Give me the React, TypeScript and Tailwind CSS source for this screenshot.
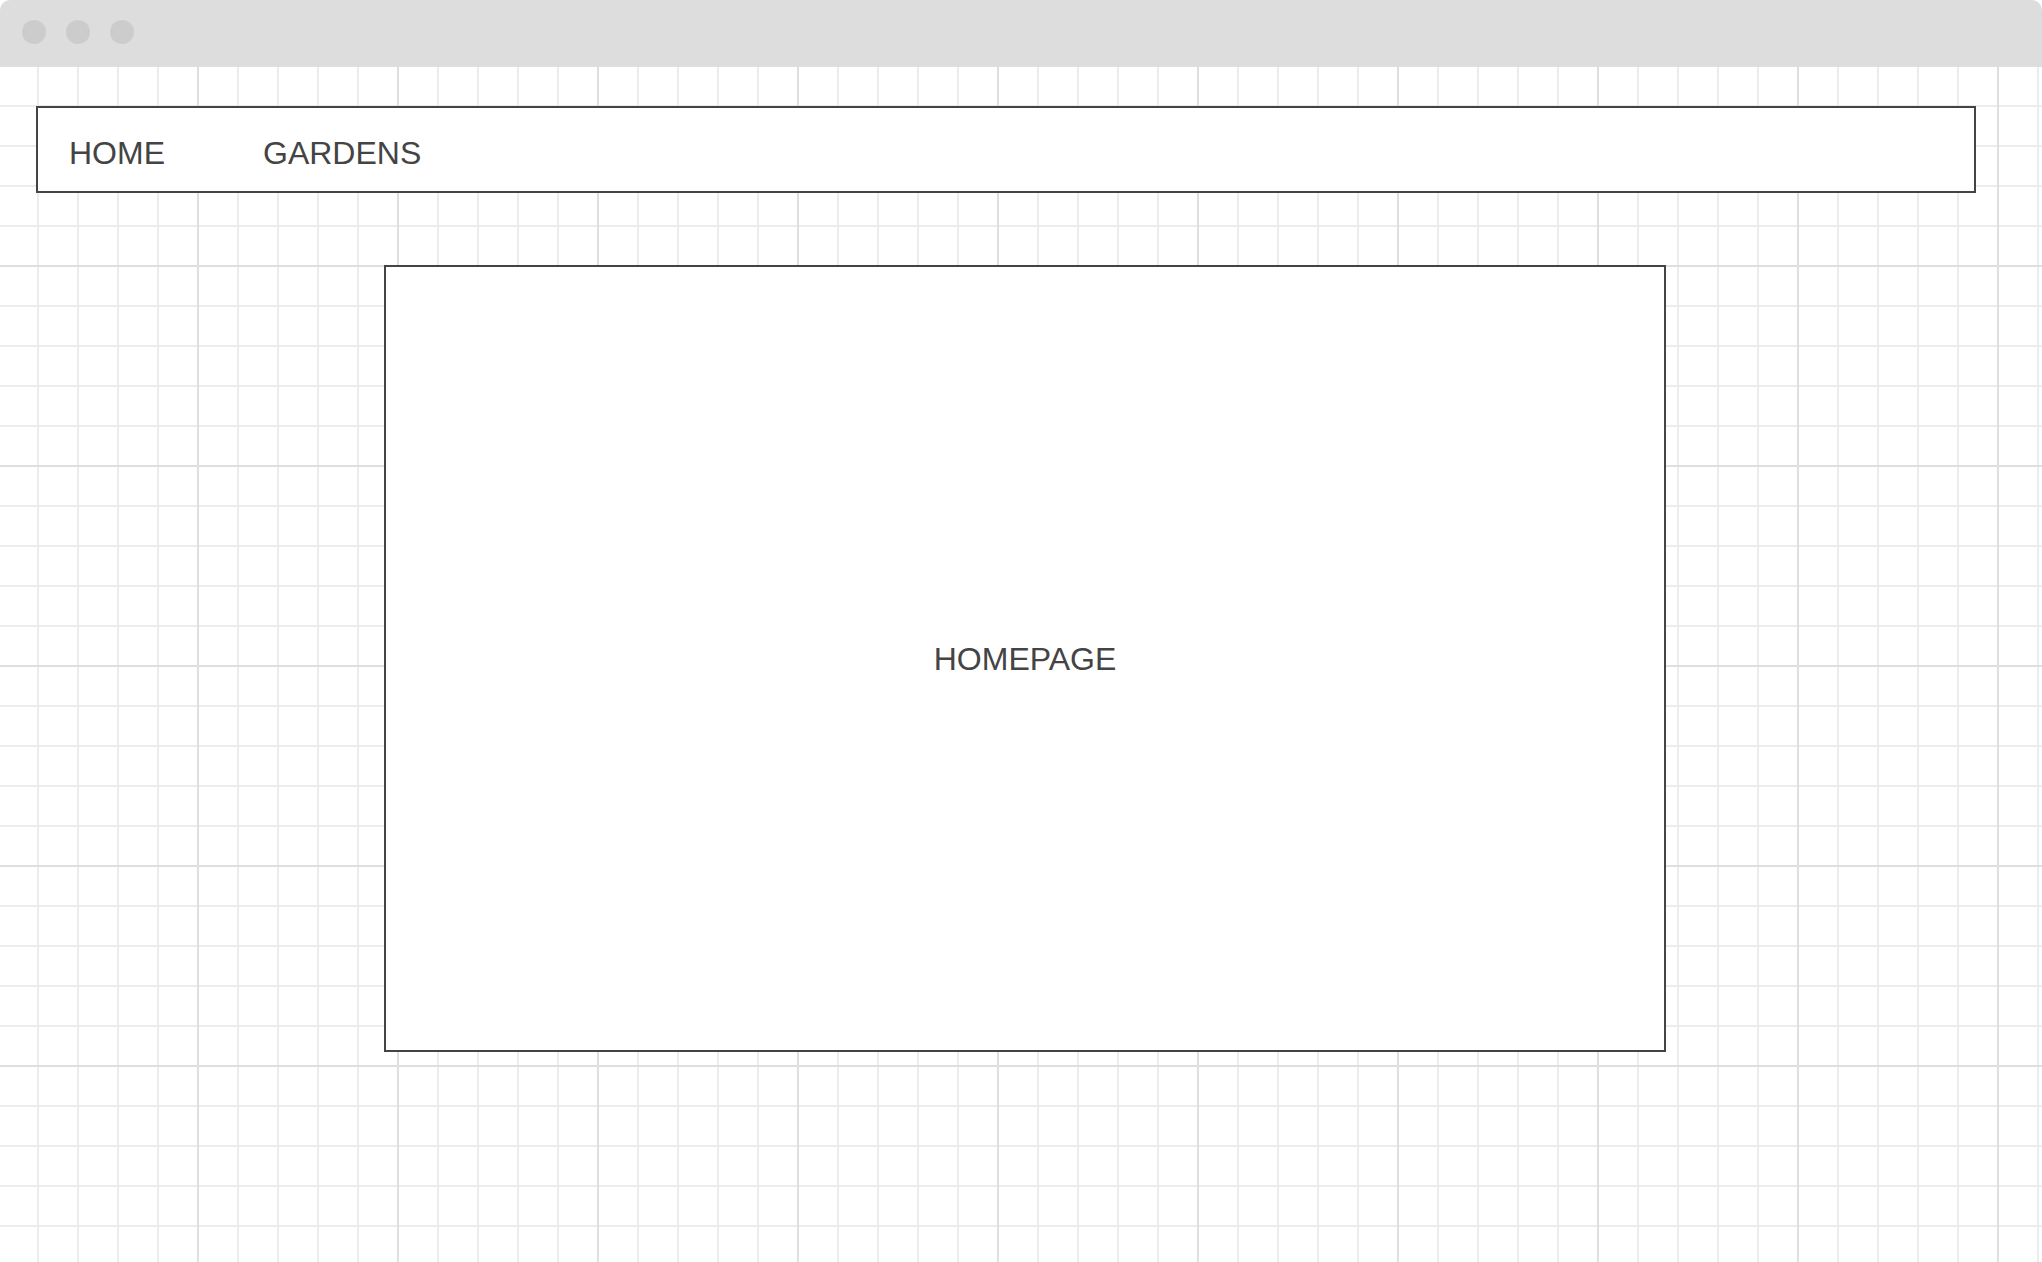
const gridBg =
  'bg-[linear-gradient(to_right,#dfdfdf_2px,transparent_2px),linear-gradient(to_bottom,#dfdfdf_2px,transparent_2px),linear-gradient(to_right,#ececec_2px,transparent_2px),linear-gradient(to_bottom,#ececec_2px,transparent_2px)] bg-[size:200px_200px,200px_200px,40px_40px,40px_40px] bg-[position:-3px_-1px,-3px_-1px,-3px_-1px,-3px_-1px]';

const NavLink = ({ label }: { label: string }) => (
  <a href="#" className="text-[32px] leading-none text-[#444444]">
    {label}
  </a>
);

export default function App() {
  return (
    <div
      className="flex min-h-screen w-[2042px] flex-col bg-white"
      style={{ fontFamily: '"Liberation Sans", Arial, sans-serif' }}
    >
      {/* window chrome */}
      <div className="flex h-[66px] shrink-0 items-center gap-5 rounded-t-[10px] bg-[#dddddd] pb-[2px] pl-[22px]">
        <span className="h-6 w-6 rounded-full bg-[#cccccc]" />
        <span className="h-6 w-6 rounded-full bg-[#cccccc]" />
        <span className="h-6 w-6 rounded-full bg-[#cccccc]" />
      </div>

      <div className={`flex flex-1 flex-col ${gridBg}`}>
        <nav className="ml-[36px] mt-[40px] flex h-[87px] w-[1940px] items-center gap-[98px] border-2 border-[#444444] bg-white pl-[31px] pt-[6px]">
          <NavLink label="HOME" />
          <NavLink label="GARDENS" />
        </nav>

        <main className="ml-[384px] mt-[72px] flex h-[787px] w-[1282px] items-center justify-center border-2 border-[#444444] bg-white">
          <span className="text-[32px] leading-none text-[#444444]">HOMEPAGE</span>
        </main>
      </div>
    </div>
  );
}
